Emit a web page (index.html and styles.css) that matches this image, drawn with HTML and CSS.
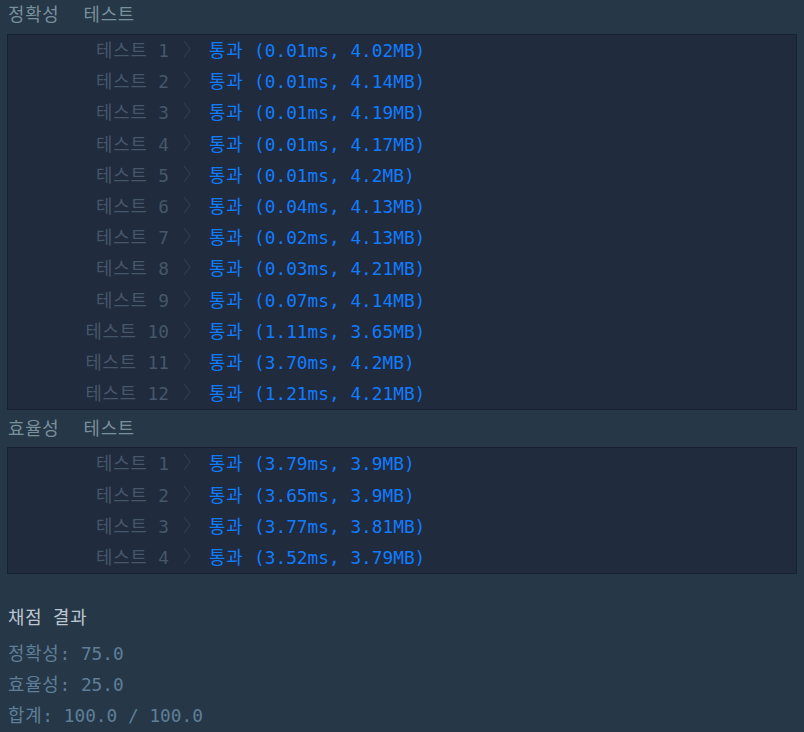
FILE: index.html
```html
<!DOCTYPE html>
<html lang="ko">
<head>
<meta charset="utf-8">
<title>채점 결과</title>
<link rel="stylesheet" href="styles.css">
</head>
<body>
<div class="page">
  <div class="heading heading-first"><span class="ko">정확성</span><span class="ko sub">테스트</span></div>
  <div class="box">
    <div class="row"><span class="label"><span class="ko">테스트</span> 1</span><svg class="chev" viewBox="0 0 8 18"><polyline points="1,1 7,9 1,17"/></svg><span class="result"><span class="ko">통과</span> (0.01ms, 4.02MB)</span></div>
    <div class="row"><span class="label"><span class="ko">테스트</span> 2</span><svg class="chev" viewBox="0 0 8 18"><polyline points="1,1 7,9 1,17"/></svg><span class="result"><span class="ko">통과</span> (0.01ms, 4.14MB)</span></div>
    <div class="row"><span class="label"><span class="ko">테스트</span> 3</span><svg class="chev" viewBox="0 0 8 18"><polyline points="1,1 7,9 1,17"/></svg><span class="result"><span class="ko">통과</span> (0.01ms, 4.19MB)</span></div>
    <div class="row"><span class="label"><span class="ko">테스트</span> 4</span><svg class="chev" viewBox="0 0 8 18"><polyline points="1,1 7,9 1,17"/></svg><span class="result"><span class="ko">통과</span> (0.01ms, 4.17MB)</span></div>
    <div class="row"><span class="label"><span class="ko">테스트</span> 5</span><svg class="chev" viewBox="0 0 8 18"><polyline points="1,1 7,9 1,17"/></svg><span class="result"><span class="ko">통과</span> (0.01ms, 4.2MB)</span></div>
    <div class="row"><span class="label"><span class="ko">테스트</span> 6</span><svg class="chev" viewBox="0 0 8 18"><polyline points="1,1 7,9 1,17"/></svg><span class="result"><span class="ko">통과</span> (0.04ms, 4.13MB)</span></div>
    <div class="row"><span class="label"><span class="ko">테스트</span> 7</span><svg class="chev" viewBox="0 0 8 18"><polyline points="1,1 7,9 1,17"/></svg><span class="result"><span class="ko">통과</span> (0.02ms, 4.13MB)</span></div>
    <div class="row"><span class="label"><span class="ko">테스트</span> 8</span><svg class="chev" viewBox="0 0 8 18"><polyline points="1,1 7,9 1,17"/></svg><span class="result"><span class="ko">통과</span> (0.03ms, 4.21MB)</span></div>
    <div class="row"><span class="label"><span class="ko">테스트</span> 9</span><svg class="chev" viewBox="0 0 8 18"><polyline points="1,1 7,9 1,17"/></svg><span class="result"><span class="ko">통과</span> (0.07ms, 4.14MB)</span></div>
    <div class="row"><span class="label"><span class="ko">테스트</span> 10</span><svg class="chev" viewBox="0 0 8 18"><polyline points="1,1 7,9 1,17"/></svg><span class="result"><span class="ko">통과</span> (1.11ms, 3.65MB)</span></div>
    <div class="row"><span class="label"><span class="ko">테스트</span> 11</span><svg class="chev" viewBox="0 0 8 18"><polyline points="1,1 7,9 1,17"/></svg><span class="result"><span class="ko">통과</span> (3.70ms, 4.2MB)</span></div>
    <div class="row"><span class="label"><span class="ko">테스트</span> 12</span><svg class="chev" viewBox="0 0 8 18"><polyline points="1,1 7,9 1,17"/></svg><span class="result"><span class="ko">통과</span> (1.21ms, 4.21MB)</span></div>
  </div>
  <div class="heading heading-next"><span class="ko">효율성</span><span class="ko sub">테스트</span></div>
  <div class="box">
    <div class="row"><span class="label"><span class="ko">테스트</span> 1</span><svg class="chev" viewBox="0 0 8 18"><polyline points="1,1 7,9 1,17"/></svg><span class="result"><span class="ko">통과</span> (3.79ms, 3.9MB)</span></div>
    <div class="row"><span class="label"><span class="ko">테스트</span> 2</span><svg class="chev" viewBox="0 0 8 18"><polyline points="1,1 7,9 1,17"/></svg><span class="result"><span class="ko">통과</span> (3.65ms, 3.9MB)</span></div>
    <div class="row"><span class="label"><span class="ko">테스트</span> 3</span><svg class="chev" viewBox="0 0 8 18"><polyline points="1,1 7,9 1,17"/></svg><span class="result"><span class="ko">통과</span> (3.77ms, 3.81MB)</span></div>
    <div class="row"><span class="label"><span class="ko">테스트</span> 4</span><svg class="chev" viewBox="0 0 8 18"><polyline points="1,1 7,9 1,17"/></svg><span class="result"><span class="ko">통과</span> (3.52ms, 3.79MB)</span></div>
  </div>
  <div class="summary">
    <div class="summary-title"><span class="ko">채점</span> <span class="ko">결과</span></div>
    <div class="summary-line"><span class="ko">정확성</span>: 75.0</div>
    <div class="summary-line"><span class="ko">효율성</span>: 25.0</div>
    <div class="summary-line"><span class="ko">합계</span>: 100.0 / 100.0</div>
  </div>
</div>
</body>
</html>
```
FILE: styles.css
```css
html, body {
  margin: 0;
  padding: 0;
  background: #263747;
}
body {
  font-family: "DejaVu Sans Mono", "Noto Sans CJK KR", monospace;
  font-size: 17.8px;
  color: #78909c;
}
.ko {
  letter-spacing: 0.8px;
}
.page {
  padding: 0 7px;
  width: 790px;
  height: 732px;
  overflow: hidden;
}
.heading {
  line-height: 30px;
  padding-left: 1px;
  color: #78909c;
  white-space: pre;
}
.heading .sub {
  margin-left: 24px;
}
.heading-first {
  margin-bottom: 4px;
}
.heading-next {
  margin-top: 4px;
  margin-bottom: 3px;
}
.box {
  background: #202b3d;
  border: 1px solid #172130;
}
.row {
  display: flex;
  align-items: center;
  height: 31.2px;
  padding-bottom: 3px;
  box-sizing: border-box;
  white-space: pre;
}
.label {
  width: 161px;
  text-align: right;
  color: #46576b;
}
.chev {
  width: 8px;
  height: 18px;
  margin-left: 14px;
  margin-right: 18px;
  fill: none;
  stroke: #303e4f;
  stroke-width: 1.2;
}
.result {
  color: #127cff;
}
.summary {
  margin-top: 27px;
  padding-left: 1px;
}
.summary-title {
  line-height: 31px;
  padding-top: 1px;
  color: #bcc7d1;
  margin-bottom: 5px;
  white-space: pre;
}
.summary-line {
  line-height: 31px;
  color: #5f7f98;
  white-space: pre;
}
```
